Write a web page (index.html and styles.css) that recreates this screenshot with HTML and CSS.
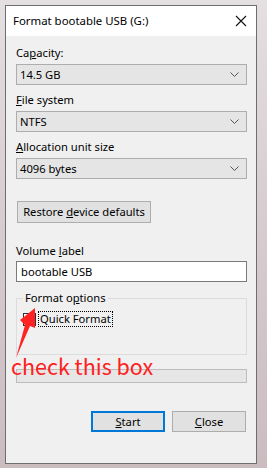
FILE: index.html
```html
<!DOCTYPE html>
<html>
<head>
<meta charset="utf-8">
<link rel="stylesheet" href="styles.css">
</head>
<body>
<div class="window">
  <div class="titlebar">
    <span class="title">Format bootable USB (G:)</span>
    <svg class="close" width="12" height="12" viewBox="0 0 12 12"><path d="M1 1 L11 11 M11 1 L1 11" stroke="#111" stroke-width="1.1"/></svg>
  </div>
  <div class="content">
    <div class="label">Ca<u>p</u>acity:</div>
    <div class="combo"><span>14.5 GB</span><svg class="chev" width="9" height="5" viewBox="0 0 9 5"><path d="M0.5 0.5 L4.5 4.5 L8.5 0.5" fill="none" stroke="#555" stroke-width="1"/></svg></div>
    <div class="label"><u>F</u>ile system</div>
    <div class="combo"><span>NTFS</span><svg class="chev" width="9" height="5" viewBox="0 0 9 5"><path d="M0.5 0.5 L4.5 4.5 L8.5 0.5" fill="none" stroke="#555" stroke-width="1"/></svg></div>
    <div class="label"><u>A</u>llocation unit size</div>
    <div class="combo"><span>4096 bytes</span><svg class="chev" width="9" height="5" viewBox="0 0 9 5"><path d="M0.5 0.5 L4.5 4.5 L8.5 0.5" fill="none" stroke="#555" stroke-width="1"/></svg></div>
    <div class="btn restore"><span>Restore <u>d</u>evice defaults</span></div>
    <div class="label vol">Volume <u>l</u>abel</div>
    <div class="textbox">bootable USB</div>
    <fieldset class="group">
      <legend>Format o<u>p</u>tions</legend>
      <div class="check-row">
        <span class="checkbox"></span>
        <span class="check-text">Quick Format</span>
      </div>
    </fieldset>
    <div class="progress"></div>
    <div class="buttons">
      <div class="btn action primary"><span><u>S</u>tart</span></div>
      <div class="btn action"><span><u>C</u>lose</span></div>
    </div>
  </div>
</div>
<svg class="arrow" width="267" height="468" viewBox="0 0 267 468">
  <polygon points="16,358 25,325 20,320 35,308 35,328 30,326" fill="#ff2222"/>
</svg>
<div class="annot">check this box</div>
</body>
</html>
```
FILE: styles.css
```css
html, body {
  margin: 0;
  padding: 0;
}
body {
  width: 267px;
  height: 468px;
  overflow: hidden;
  position: relative;
  background: linear-gradient(180deg, #e4dfe1 0%, #d6cbcf 50%, #cbbcc0 100%);
  font-family: "Noto Sans", "Open Sans", sans-serif;
  font-size: 11.2px;
  color: #000;
}
.window {
  position: relative;
  margin: 5px 0 0 5px;
  width: 250px;
  height: 457px;
  border: 1px solid #6e6e6e;
  background: #f0f0f0;
  display: flex;
  flex-direction: column;
}
.titlebar {
  height: 30px;
  background: #fff;
  display: flex;
  align-items: center;
  justify-content: space-between;
  padding: 0 9px 0 7px;
  flex: none;
}
.title {
  font-size: 11.4px;
  line-height: 16px;
}
.close {
  display: block;
}
.content {
  padding: 9px 9px 0 10px;
  display: flex;
  flex-direction: column;
}
u {
  text-decoration: underline;
  text-underline-offset: 1px;
}
.label {
  height: 16px;
  line-height: 16px;
  margin-bottom: 3px;
}
.combo {
  height: 19px;
  border: 1px solid #adadad;
  background: #e5e5e5;
  display: flex;
  align-items: center;
  justify-content: space-between;
  padding: 0 7px 0 3px;
  margin-bottom: 7px;
  line-height: 16px;
}
.chev {
  display: block;
}
.btn {
  border: 1px solid #adadad;
  background: #e1e1e1;
  display: flex;
  align-items: center;
  justify-content: center;
  line-height: 16px;
}
.restore {
  margin-top: 15px;
  margin-left: 1px;
  width: 132px;
  height: 20px;
}
.vol {
  margin-top: 20px;
  margin-bottom: 2px;
}
.textbox {
  height: 19px;
  border: 1px solid #7a7a7a;
  background: #fff;
  line-height: 19px;
  padding-left: 4px;
}
.group {
  margin: 8px 0 0 0;
  padding: 4px 0 0 6px;
  border: 1px solid #dcdcdc;
  height: 65px;
  box-sizing: border-box;
  min-width: 0;
}
.group legend {
  padding: 0 2px;
  margin-left: 0;
  line-height: 16px;
}
.check-row {
  display: flex;
  align-items: center;
  gap: 2px;
  margin-top: 1px;
}
.checkbox {
  width: 11px;
  height: 11px;
  border: 1px solid #333;
  background: #fff;
  flex: none;
}
.check-text {
  border: 1px dotted #000;
  padding: 0 1px;
  line-height: 14px;
}
.progress {
  margin-top: 14px;
  height: 12px;
  border: 1px solid #bcbcbc;
  background: #e6e6e6;
}
.buttons {
  margin-top: 28px;
  display: flex;
  justify-content: flex-end;
  gap: 7px;
  padding-right: 1px;
}
.action {
  width: 72px;
  height: 19px;
}
.primary {
  border: 2px solid #0078d7;
  width: 70px;
  height: 17px;
}
.arrow {
  position: absolute;
  left: 0;
  top: 0;
  pointer-events: none;
}
.annot {
  position: absolute;
  left: 11px;
  top: 352px;
  font-family: "Noto Sans CJK SC", "Noto Sans", sans-serif;
  font-size: 21.5px;
  line-height: 28px;
  color: #ff2020;
}
```
